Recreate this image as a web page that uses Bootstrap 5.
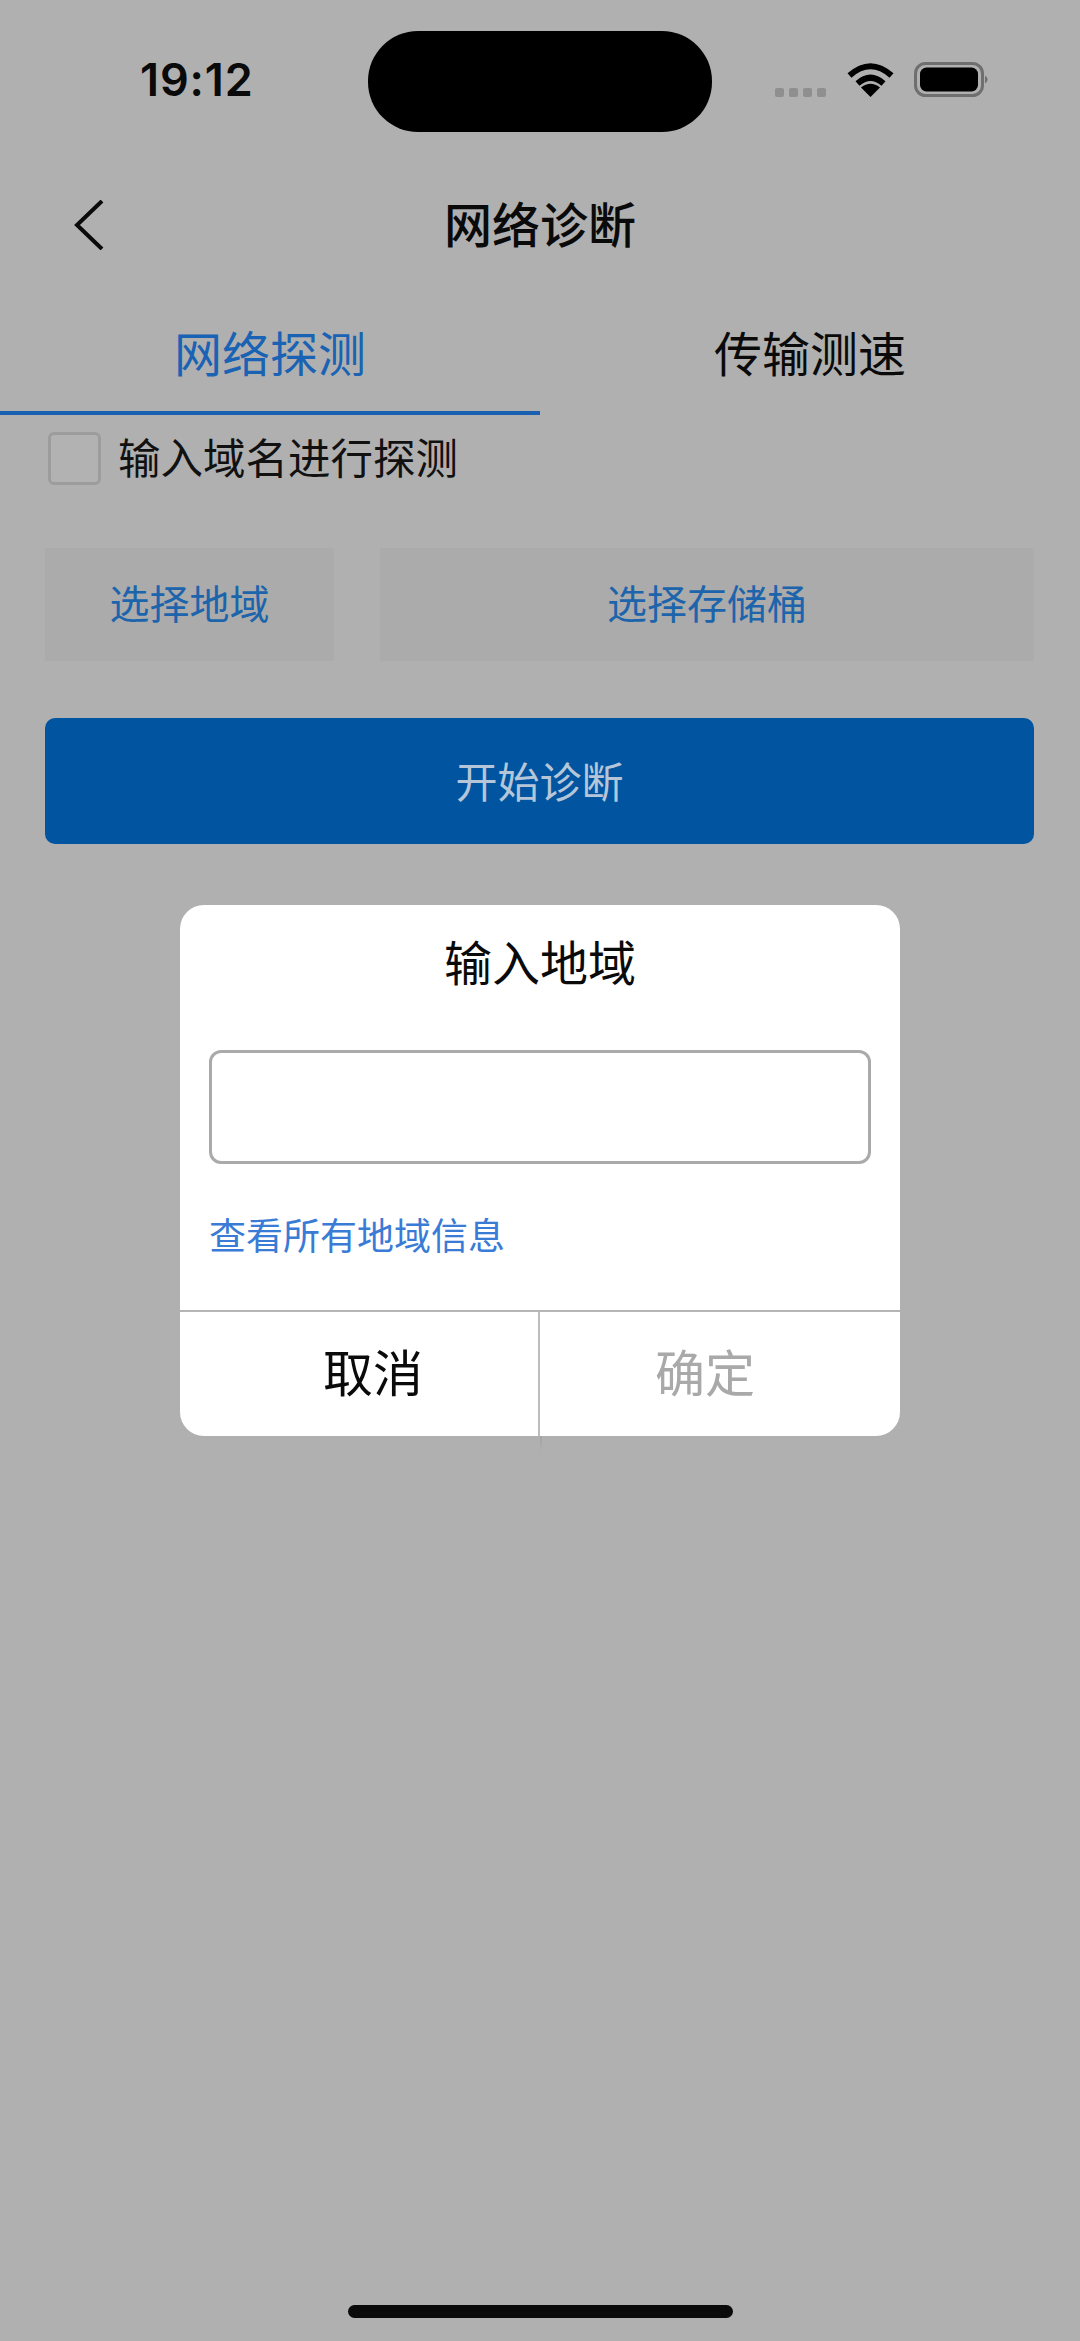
<!DOCTYPE html>
<html lang="zh-CN">
<head>
<meta charset="utf-8">
<title>网络诊断</title>
<link href="https://cdn.jsdelivr.net/npm/bootstrap@5.3.0/dist/css/bootstrap.min.css" rel="stylesheet">
<style>
html,body{margin:0;background:#b0b0b0}
body{font-family:"Noto Sans CJK SC","Liberation Sans",sans-serif;color:#0a0a0a}
.phone{position:relative;width:1080px;height:2341px;background:#b0b0b0;overflow:hidden}
.status{height:132px;padding-top:31px}
.clock{width:368px;padding:22px 0 0 140px;font:600 45px/54px "Inter","Liberation Sans",sans-serif;letter-spacing:.9px;color:#0a0a0a}
.island{width:344px;height:101px;background:#000;border-radius:50px;flex:none}
.sig{padding-left:63px;height:66px}
.sig-dots{gap:5px;margin-top:57px}
.sig-dots i{display:block;width:9px;height:9px;border-radius:2px;background:#8f8f8f}
.wifi{margin:32px 0 0 21px;display:block}
.batt{margin:31px 0 0 20px;display:block}
.head{margin-top:48px;height:90px}
.back{left:73px;top:20px}
.head-title{font-size:48px;font-weight:500;line-height:84px;color:#0a0a0a}
.tabs{height:145px}
.tabs .nav-link{height:145px;width:540px;padding:20px 0 0;font-size:48px;line-height:118px;color:#0a0a0a;border:0;border-bottom:4px solid transparent;border-radius:0;background:none}
.tabs .nav-link.active{color:#1a62b3;border-bottom-color:#1a60b0}
.chk-row{margin:17px 0 0 48px;height:53px}
.chk-row .form-check-input{width:53px;height:53px;margin:0;background-color:#b2b2b2;border:3px solid #9c9c9c;border-radius:6px;flex:none}
.chk-row label{margin-left:17px;font-size:42.5px;line-height:47px;padding-bottom:6px;color:#111}
.pick-row{margin:63px 46px 0 45px;gap:46px}
.pick{height:113px;background:#ababab;border:0;border-radius:2px;color:#1c64ab;font-size:40px;padding:0 0 5px}
.pick-a{width:289px;flex:none}
.go{display:block;margin:57px 46px 0 45px;width:989px;height:126px;background:#0054a0;border:0;border-radius:10px;color:#b5c6d8;font-size:42px;padding:0 0 4px}
.dlg{position:absolute;left:180px;top:905px;width:720px;height:531px;border:0;border-radius:24px;background:#fff}
.dlg::after{content:"";position:absolute;left:360px;top:531px;width:2px;height:16px;background:linear-gradient(#a4a4a4,#b0b0b0)}
.dlg-title{font-size:48px;line-height:60px;text-align:center;padding-top:25px;color:#0a0a0a}
.dlg-input{display:block;margin:60px 30px 0 29px;width:662px;height:114px;border:3px solid #aaa;border-radius:12px;background:#fff}
.dlg-link{display:block;margin:42px 0 0 29px;font-size:37px;line-height:56px;color:#3a7bd5;text-decoration:none}
.dlg-foot{position:absolute;left:0;right:0;bottom:0;height:126px;border-top:2px solid #b5b5b5}
.dlg-btn{flex:1 1 0;height:124px;background:none;border:0;border-radius:0;font-size:50px;padding:0 0 8px;color:#0a0a0a}
.dlg-cancel{padding-left:28px}
.dlg-ok:disabled{color:#a9a9a9;opacity:1;border:0;border-left:2px solid #bdbdbd;padding-right:30px}
.home{position:absolute;left:348px;top:2305px;width:385px;height:13px;border-radius:7px;background:#0a0a0a}
</style>
</head>
<body>
<div class="phone">
  <div class="status d-flex">
    <div class="clock">19:12</div>
    <div class="island"></div>
    <div class="sig d-flex">
      <div class="sig-dots d-flex"><i></i><i></i><i></i><i></i></div>
      <svg class="wifi" width="47" height="34" viewBox="0 0 47 34"><g fill="none" stroke="#000" stroke-width="6"><path d="M2.5 12.5Q23.5-6 44.5 12.5"/><path d="M10.5 20.5Q23.5 9 36.5 20.5"/></g><path d="M23.500 34L14 24.500Q23.500 17 33 24.500Z" fill="#000"/></svg>
      <svg class="batt" width="76" height="35" viewBox="0 0 76 35"><rect x="1.500" y="1.500" width="67" height="32" rx="10" fill="none" stroke="#6f6f6f" stroke-width="3"/><rect x="6" y="5.500" width="58" height="24" rx="6.500" fill="#000"/><path d="M71 13.500Q76 17.500 71 21.500Z" fill="#6f6f6f"/></svg>
    </div>
  </div>
  <div class="head position-relative text-center">
    <svg class="back position-absolute" width="32" height="50" viewBox="0 0 32 50"><path d="M29 1L4 25l25 24" fill="none" stroke="#0a0a0a" stroke-width="4"/></svg>
    <div class="head-title">网络诊断</div>
  </div>
  <nav class="tabs nav">
    <button class="nav-link active text-center" type="button">网络探测</button>
    <button class="nav-link text-center" type="button">传输测速</button>
  </nav>
  <div class="chk-row d-flex align-items-center">
    <input class="form-check-input" type="checkbox" id="useDomain">
    <label for="useDomain">输入域名进行探测</label>
  </div>
  <div class="pick-row d-flex">
    <button class="btn pick pick-a" type="button">选择地域</button>
    <button class="btn pick flex-grow-1" type="button">选择存储桶</button>
  </div>
  <button class="btn go" type="button">开始诊断</button>

  <div class="card dlg">
    <div class="dlg-title">输入地域</div>
    <input class="dlg-input" type="text" aria-label="输入地域">
    <a class="dlg-link" href="#">查看所有地域信息</a>
    <div class="dlg-foot d-flex">
      <button class="btn dlg-btn dlg-cancel" type="button">取消</button>
      <button class="btn dlg-btn dlg-ok" type="button" disabled>确定</button>
    </div>
  </div>
  <div class="home"></div>
</div>
<script src="https://cdn.jsdelivr.net/npm/bootstrap@5.3.0/dist/js/bootstrap.bundle.min.js"></script>
</body>
</html>
